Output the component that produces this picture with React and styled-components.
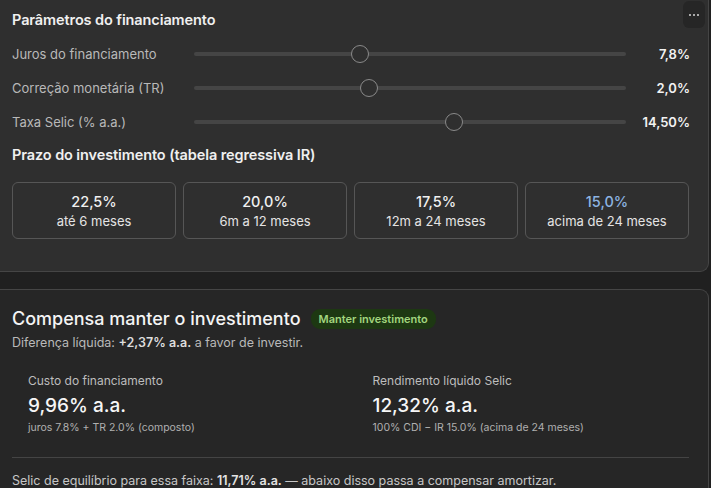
import React from "react";
import styled, { createGlobalStyle } from "styled-components";

const Global = createGlobalStyle`
  html, body {
    margin: 0;
    padding: 0;
    background: #202020;
    font-family: Inter, "Noto Sans", sans-serif;
    color: #ececec;
  }
  * { box-sizing: border-box; }
`;

const Page = styled.div`
  width: 711px;
  height: 488px;
  overflow: hidden;
  display: flex;
  flex-direction: column;
  gap: 17px;
  padding-right: 2px;
`;

const Panel = styled.section`
  background: ${(p) => p.$bg};
  border: 1px solid #454545;
  border-left: none;
  ${(p) => (p.$top ? "border-top: none;" : "border-bottom: none;")}
  border-radius: ${(p) => (p.$top ? "0 0 9px 0" : "0 9px 0 0")};
  position: relative;
`;

const TopInner = styled.div`
  padding: 11px 19px 32px 12px;
`;

const Heading = styled.h2`
  margin: 0;
  font-size: 14.5px;
  font-weight: 600;
  color: #f0f0f0;
  letter-spacing: -0.1px;
`;

const MoreButton = styled.button`
  position: absolute;
  top: 1px;
  right: 3px;
  width: 22px;
  height: 27px;
  border: none;
  border-radius: 6px;
  background: #262626;
  padding: 0;
  display: flex;
  align-items: center;
  justify-content: center;
  gap: 2px;
`;

const Dot = styled.span`
  width: 2px;
  height: 2px;
  border-radius: 50%;
  background: #d6d6d6;
`;

const Sliders = styled.div`
  display: flex;
  flex-direction: column;
  gap: 14px;
  margin-top: 16px;
`;

const SliderRow = styled.div`
  display: grid;
  grid-template-columns: 182px 1fr 64px;
  align-items: center;
  height: 20px;
`;

const Label = styled.span`
  font-size: 13px;
  color: #b9b9b9;
`;

const Track = styled.div`
  position: relative;
  height: 4px;
  border-radius: 2px;
  background: #454545;
  width: 432px;
`;

const Thumb = styled.div`
  position: absolute;
  top: 50%;
  width: 18px;
  height: 18px;
  border-radius: 50%;
  border: 1.5px solid #8a8a8a;
  background: #2f2f2f;
  transform: translate(-50%, -50%);
`;

const Value = styled.span`
  text-align: right;
  font-size: 13px;
  font-weight: 600;
  color: #f2f2f2;
`;

const SubHeading = styled(Heading)`
  margin-top: 14px;
`;

const Ranges = styled.div`
  display: grid;
  grid-template-columns: repeat(4, 164px);
  gap: 7px;
  margin-top: 19px;
`;

const RangeCard = styled.div`
  height: 57px;
  border: 1px solid #565656;
  border-radius: 6px;
  display: flex;
  flex-direction: column;
  align-items: center;
  justify-content: center;
  gap: 3px;
`;

const RangeRate = styled.span`
  font-size: 14.5px;
  font-weight: 500;
  color: ${(p) => (p.$active ? "#8db4e2" : "#f0f0f0")};
`;

const RangeLabel = styled.span`
  font-size: 13px;
  color: #e4e4e4;
`;

const BottomInner = styled.div`
  padding: 18px 19px 0 12px;
`;

const TitleRow = styled.div`
  display: flex;
  align-items: center;
  gap: 10px;
`;

const Title = styled.h1`
  margin: 0;
  font-size: 18px;
  font-weight: 500;
  color: #f4f4f4;
`;

const Badge = styled.span`
  background: #1d3812;
  color: #a3d67f;
  font-size: 11px;
  font-weight: 600;
  padding: 3px 8px;
  border-radius: 9px;
`;

const Summary = styled.p`
  margin: 6px 0 0;
  font-size: 12.5px;
  color: #b9b9b9;
  b { color: #dedede; font-weight: 600; }
`;

const Metrics = styled.div`
  display: grid;
  grid-template-columns: 1fr 1fr;
  gap: 12px;
  margin-top: 23px;
  padding-bottom: 23px;
  border-bottom: 1px solid #444;
`;

const Metric = styled.div`
  padding: 0 16px;
  display: flex;
  flex-direction: column;
`;

const MetricLabel = styled.span`
  font-size: 12px;
  color: #bdbdbd;
`;

const MetricValue = styled.span`
  font-size: 19px;
  font-weight: 500;
  color: #f6f6f6;
  margin-top: 6px;
`;

const MetricNote = styled.span`
  font-size: 10.5px;
  color: #b0b0b0;
  margin-top: 4px;
`;

const Footnote = styled.p`
  margin: 15px 0 0;
  font-size: 12.5px;
  color: #c6c6c6;
  b { color: #e2e2e2; font-weight: 600; }
`;

const sliders = [
  { label: "Juros do financiamento", value: "7,8%", pos: 166 },
  { label: "Correção monetária (TR)", value: "2,0%", pos: 175 },
  { label: "Taxa Selic (% a.a.)", value: "14,50%", pos: 260 },
];

const ranges = [
  { rate: "22,5%", label: "até 6 meses" },
  { rate: "20,0%", label: "6m a 12 meses" },
  { rate: "17,5%", label: "12m a 24 meses" },
  { rate: "15,0%", label: "acima de 24 meses", active: true },
];

export default function App() {
  return (
    <>
      <Global />
      <Page>
        <Panel $top $bg="#2f2f2f">
          <MoreButton aria-label="Mais opções">
            <Dot />
            <Dot />
            <Dot />
          </MoreButton>
          <TopInner>
            <Heading>Parâmetros do financiamento</Heading>
            <Sliders>
              {sliders.map((s) => (
                <SliderRow key={s.label}>
                  <Label>{s.label}</Label>
                  <Track>
                    <Thumb style={{ left: s.pos }} />
                  </Track>
                  <Value>{s.value}</Value>
                </SliderRow>
              ))}
            </Sliders>
            <SubHeading>Prazo do investimento (tabela regressiva IR)</SubHeading>
            <Ranges>
              {ranges.map((r) => (
                <RangeCard key={r.rate}>
                  <RangeRate $active={r.active}>{r.rate}</RangeRate>
                  <RangeLabel>{r.label}</RangeLabel>
                </RangeCard>
              ))}
            </Ranges>
          </TopInner>
        </Panel>
        <Panel $bg="#262626">
          <BottomInner>
            <TitleRow>
              <Title>Compensa manter o investimento</Title>
              <Badge>Manter investimento</Badge>
            </TitleRow>
            <Summary>
              Diferença líquida: <b>+2,37% a.a.</b> a favor de investir.
            </Summary>
            <Metrics>
              <Metric>
                <MetricLabel>Custo do financiamento</MetricLabel>
                <MetricValue>9,96% a.a.</MetricValue>
                <MetricNote>juros 7.8% + TR 2.0% (composto)</MetricNote>
              </Metric>
              <Metric>
                <MetricLabel>Rendimento líquido Selic</MetricLabel>
                <MetricValue>12,32% a.a.</MetricValue>
                <MetricNote>100% CDI − IR 15.0% (acima de 24 meses)</MetricNote>
              </Metric>
            </Metrics>
            <Footnote>
              Selic de equilíbrio para essa faixa: <b>11,71% a.a.</b> — abaixo disso passa a compensar amortizar.
            </Footnote>
          </BottomInner>
        </Panel>
      </Page>
    </>
  );
}
